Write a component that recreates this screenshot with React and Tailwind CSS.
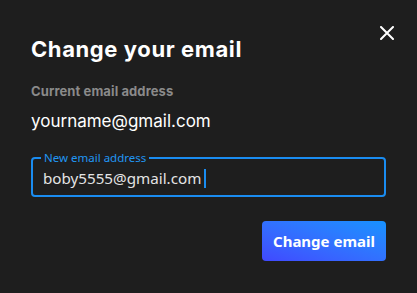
import React, { useState } from 'react';

const CloseIcon = () => (
  <svg width="14" height="14" viewBox="0 0 14 14" fill="none">
    <path d="M1 1L13 13M13 1L1 13" stroke="#ffffff" strokeWidth="2" strokeLinecap="round" />
  </svg>
);

export default function App() {
  const [email, setEmail] = useState('boby5555@gmail.com');

  return (
    <div
      className="relative w-[417px] h-[293px] bg-[#1e1e1e] px-[31px] pt-[35px] overflow-hidden"
      style={{ fontFamily: 'Inter, "Noto Sans", sans-serif' }}
    >
      {/* Close */}
      <button className="absolute top-[26px] right-[23px] flex items-center justify-center">
        <CloseIcon />
      </button>

      {/* Title */}
      <h2 className="text-[22px] leading-[28px] font-bold text-white tracking-[0.6px]">
        Change your email
      </h2>

      {/* Current */}
      <div className="mt-[20px] text-[13px] leading-[16px] font-bold text-[#8a8a8a] tracking-[0.1px]">
        Current email address
      </div>
      <div className="mt-[11px] text-[17px] leading-[22px] text-white">
        yourname@gmail.com
      </div>

      {/* New email input */}
      <div className="mt-[25px] relative h-[40px] border-2 border-[#1a8cf0] rounded-[4px] flex items-center px-[10px]">
        <span
          className="absolute left-[8px] -top-[8px] px-[3px] bg-[#1e1e1e] text-[11.5px] leading-[14px] text-[#2196f3]"
          style={{ fontFamily: '"Noto Sans", sans-serif' }}
        >
          New email address
        </span>
        <span className="text-[15.2px] leading-[22px] text-[#e4e4e4] mt-[2px]" style={{ fontFamily: '"Noto Sans", sans-serif' }}>
          {email}
        </span>
        <span className="ml-[3px] mt-[2px] w-[2px] h-[19px] bg-[#1a8cf0]" />
      </div>

      {/* Action */}
      <div className="mt-[24px] flex justify-end">
        <button
          className="w-[124px] h-[40px] rounded-[4px] bg-gradient-to-tr from-[#4048ff] to-[#1592ff] text-white text-[15px] font-bold"
          style={{ fontFamily: '"Noto Sans", sans-serif' }}
          onClick={() => setEmail(email)}
        >
          Change email
        </button>
      </div>
    </div>
  );
}
